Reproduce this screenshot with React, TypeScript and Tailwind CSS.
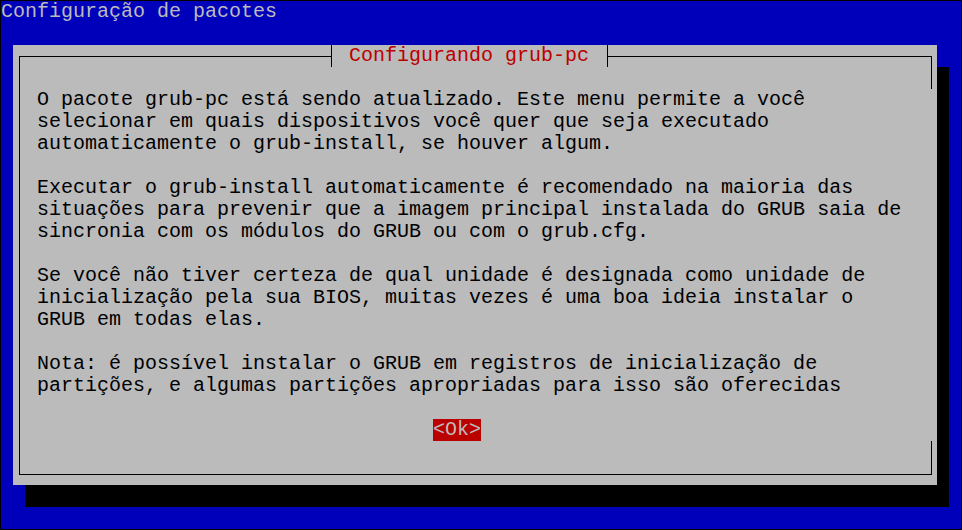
import React from "react";

const lines: string[] = [
  "O pacote grub-pc está sendo atualizado. Este menu permite a você",
  "selecionar em quais dispositivos você quer que seja executado",
  "automaticamente o grub-install, se houver algum.",
  "",
  "Executar o grub-install automaticamente é recomendado na maioria das",
  "situações para prevenir que a imagem principal instalada do GRUB saia de",
  "sincronia com os módulos do GRUB ou com o grub.cfg.",
  "",
  "Se você não tiver certeza de qual unidade é designada como unidade de",
  "inicialização pela sua BIOS, muitas vezes é uma boa ideia instalar o",
  "GRUB em todas elas.",
  "",
  "Nota: é possível instalar o GRUB em registros de inicialização de",
  "partições, e algumas partições apropriadas para isso são oferecidas",
];

export default function App() {
  return (
    <div className="w-[962px] h-[530px] bg-[#0000bb] border border-black overflow-hidden font-['Liberation_Mono',monospace] text-[20px] leading-[22px]">
      <div className="h-[22px] text-[#bbbbbb] whitespace-pre">Configuração de pacotes</div>
      <div className="h-[22px]" />
      <div className="ml-[12px] w-[924px] h-[440px] bg-[#bbbbbb] shadow-[12px_22px_0_0_#000] flex pt-[11px] pr-[5px] pb-[10px] pl-[6px]">
        <div className="flex-1 flex border-l border-t border-b border-black">
          <div className="flex-1 flex flex-col">
            <div className="-mt-[12px] h-[22px] flex items-stretch">
              <div className="ml-[311px] w-[1px] bg-black" />
              <div className="bg-[#bbbbbb] pl-[17px] pr-[18px] text-[#bb0000] whitespace-pre">Configurando grub-pc</div>
              <div className="w-[1px] bg-black" />
            </div>
            <div className="mt-[22px] pl-[17px] text-black whitespace-pre">
              {lines.map((l, i) => (
                <div key={i} className="h-[22px]">{l}</div>
              ))}
            </div>
            <div className="mt-[22px] h-[22px] flex">
              <div className="ml-[413px] bg-[#bb0000] text-[#bbbbbb] whitespace-pre">&lt;Ok&gt;</div>
            </div>
          </div>
          <div className="w-[1px] flex flex-col justify-between">
            <div className="h-[32px] bg-black" />
            <div className="h-[33px] bg-black" />
          </div>
        </div>
      </div>
    </div>
  );
}
